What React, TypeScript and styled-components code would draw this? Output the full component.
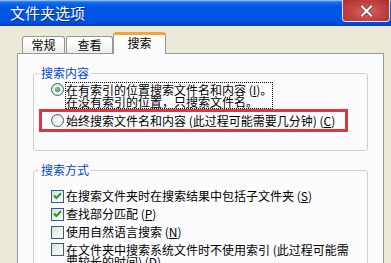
import React from "react";
import styled, { createGlobalStyle } from "styled-components";

const Global = createGlobalStyle`
  html, body { margin: 0; padding: 0; background: #ECE9D8; }
  body { font-family: "Noto Sans CJK SC", "Noto Sans", sans-serif; }
`;

const Window = styled.div`
  width: 391px;
  height: 263px;
  overflow: hidden;
  background: #ECE9D8;
  display: flex;
  flex-direction: column;
  font-family: "Noto Sans CJK SC", "Noto Sans", sans-serif;
  font-size: 12px;
  color: #000;
`;

const TitleBar = styled.div`
  height: 26px;
  flex: none;
  display: flex;
  align-items: flex-start;
  padding-left: 10px;
  box-sizing: border-box;
  background: linear-gradient(180deg, #dfe9f7 0px, #3d8ef5 1px, #1265ec 3px, #0057e6 7px, #0054e3 20px, #0049d6 24px, #003cc6 26px);
`;

const Title = styled.div`
  color: #fff;
  font-size: 15px;
  line-height: 26px;
  letter-spacing: 0px;
  text-shadow: 1px 1px 0 #0a2e8c;
`;

const CloseButton = styled.div`
  margin-left: auto;
  margin-right: 1px;
  width: 48px;
  height: 22px;
  box-sizing: border-box;
  border: 1px solid #e6dede;
  border-top: none;
  border-radius: 0 0 4px 4px;
  background: radial-gradient(ellipse at 50% 55%, #d96a6a 0%, #c44747 45%, #a8302c 100%);
  display: flex;
  align-items: center;
  justify-content: center;
`;

const Body = styled.div`
  flex: 1;
  padding: 6px 7px 0 17px;
  display: flex;
  flex-direction: column;
`;

const TabStrip = styled.div`
  height: 21px;
  display: flex;
  align-items: flex-end;
  padding-left: 5px;
`;

const Tab = styled.div<{ $active?: boolean; $w: number; $gap?: number }>`
  width: ${(p) => p.$w}px;
  margin-right: ${(p) => p.$gap ?? 0}px;
  box-sizing: border-box;
  height: ${(p) => (p.$active ? 22 : 17)}px;
  margin-bottom: ${(p) => (p.$active ? -1 : 0)}px;
  position: relative;
  z-index: ${(p) => (p.$active ? 2 : 0)};
  border: 1px solid #919b9c;
  border-bottom: none;
  border-top: ${(p) => (p.$active ? "3px solid #f3a53b" : "1px solid #919b9c")};
  border-radius: 3px 3px 0 0;
  background: ${(p) =>
    p.$active ? "#fcfcfe" : "linear-gradient(180deg, #ffffff 0%, #fafaf8 50%, #ecebe6 100%)"};
  text-align: center;
  line-height: ${(p) => (p.$active ? 14 : 15)}px;
  padding-top: ${(p) => (p.$active ? 1 : 0)}px;
  font-size: 12px;
`;

const Panel = styled.div`
  width: 367px;
  height: 230px;
  box-sizing: border-box;
  border: 1px solid #919b9c;
  background: #fcfcfe;
  padding: 0 0 0 15px;
  display: flex;
  flex-direction: column;
`;

const Group = styled.fieldset<{ $h: number; $pt: number }>`
  margin: 12px 0 0 0;
  padding: ${(p) => p.$pt}px 0 0 0;
  width: 335px;
  height: ${(p) => p.$h}px;
  box-sizing: border-box;
  border: 1px solid #d0d0bf;
  border-radius: 3px;
  min-width: 0;
  flex: none;
`;

const Legend = styled.legend`
  margin-left: 5px;
  padding: 0 2px;
  color: #0046d5;
  font-size: 12px;
  line-height: 14px;
`;

const OptionRow = styled.div<{ $ml?: number; $mt?: number; $align?: string }>`
  display: flex;
  align-items: ${(p) => p.$align ?? "center"};
  margin-left: ${(p) => p.$ml ?? 17}px;
  margin-top: ${(p) => p.$mt ?? 0}px;
`;

const Highlight = styled.div`
  margin-left: 5px;
  width: 309px;
  height: 23px;
  box-sizing: border-box;
  border: 3px solid #e2353b;
  display: flex;
  align-items: center;
  padding-left: 9px;
`;

const RadioCircle = styled.span<{ $checked?: boolean; $mt?: number }>`
  flex: none;
  width: 13px;
  height: 13px;
  box-sizing: border-box;
  border-radius: 50%;
  border: 1px solid #2f5f8e;
  margin-top: ${(p) => p.$mt ?? 0}px;
  background: radial-gradient(circle at 65% 65%, #ffffff 0%, #f4f4f0 35%, #d8d8d0 100%);
  display: flex;
  align-items: center;
  justify-content: center;
  &::after {
    content: "";
    display: ${(p) => (p.$checked ? "block" : "none")};
    width: 5px;
    height: 5px;
    border-radius: 50%;
    background: radial-gradient(circle at 40% 40%, #8fe08f 0%, #2fb52f 50%, #1e8a1e 100%);
  }
`;

const CheckBox = styled.span<{ $mt?: number }>`
  flex: none;
  width: 13px;
  height: 13px;
  box-sizing: border-box;
  border: 1px solid #2f5f8e;
  margin-top: ${(p) => p.$mt ?? 0}px;
  background: linear-gradient(135deg, #dcdcd5 0%, #f0f0ea 45%, #ffffff 100%);
  display: flex;
  align-items: center;
  justify-content: center;
`;

const Label = styled.span<{ $focus?: boolean }>`
  margin-left: 1px;
  padding: ${(p) => (p.$focus ? "1px 0 0 0" : "0")};
  border: 1px ${(p) => (p.$focus ? "dotted #000" : "solid transparent")};
  line-height: 12px;
  font-size: 12px;
  white-space: nowrap;
`;

const Acc = styled.span`
  text-decoration: underline;
`;

const Checks = styled.div`
  display: flex;
  flex-direction: column;
  gap: 4px;
`;

const Check = () => (
  <svg width="9" height="8" viewBox="0 0 9 8">
    <path d="M1 3.5 L3.4 6 L8 1.2" fill="none" stroke="#21a121" strokeWidth="2.2" />
  </svg>
);

export default function App() {
  return (
    <>
      <Global />
      <Window>
        <TitleBar>
          <Title>文件夹选项</Title>
          <CloseButton>
            <svg width="13" height="12" viewBox="0 0 13 12">
              <path d="M2 1.5 L11 10.5 M11 1.5 L2 10.5" stroke="#7a2222" strokeWidth="3.6" strokeLinecap="square" />
              <path d="M2 1.5 L11 10.5 M11 1.5 L2 10.5" stroke="#ffffff" strokeWidth="2.2" strokeLinecap="square" />
            </svg>
          </CloseButton>
        </TitleBar>
        <Body>
          <TabStrip>
            <Tab $w={43} $gap={1}>常规</Tab>
            <Tab $w={47}>查看</Tab>
            <Tab $w={53} $active>搜索</Tab>
          </TabStrip>
          <Panel>
            <Group $h={85} $pt={2}>
              <Legend>搜索内容</Legend>
              <OptionRow $align="flex-start">
                <RadioCircle $checked $mt={1} />
                <Label $focus>
                  在有索引的位置搜索文件名和内容 (<Acc>I</Acc>)。
                  <br />
                  在没有索引的位置，只搜索文件名。
                </Label>
              </OptionRow>
              <Highlight>
                <RadioCircle />
                <Label>始终搜索文件名和内容 (此过程可能需要几分钟) (<Acc>C</Acc>)</Label>
              </Highlight>
            </Group>
            <Group $h={110} $pt={12}>
              <Legend>搜索方式</Legend>
              <Checks>
                <OptionRow>
                  <CheckBox><Check /></CheckBox>
                  <Label>在搜索文件夹时在搜索结果中包括子文件夹 (<Acc>S</Acc>)</Label>
                </OptionRow>
                <OptionRow>
                  <CheckBox><Check /></CheckBox>
                  <Label>查找部分匹配 (<Acc>P</Acc>)</Label>
                </OptionRow>
                <OptionRow>
                  <CheckBox />
                  <Label>使用自然语言搜索 (<Acc>N</Acc>)</Label>
                </OptionRow>
                <OptionRow $align="flex-start">
                  <CheckBox />
                  <Label>
                    在文件夹中搜索系统文件时不使用索引 (此过程可能需
                    <br />
                    要较长的时间) (<Acc>D</Acc>)
                  </Label>
                </OptionRow>
              </Checks>
            </Group>
          </Panel>
        </Body>
      </Window>
    </>
  );
}
